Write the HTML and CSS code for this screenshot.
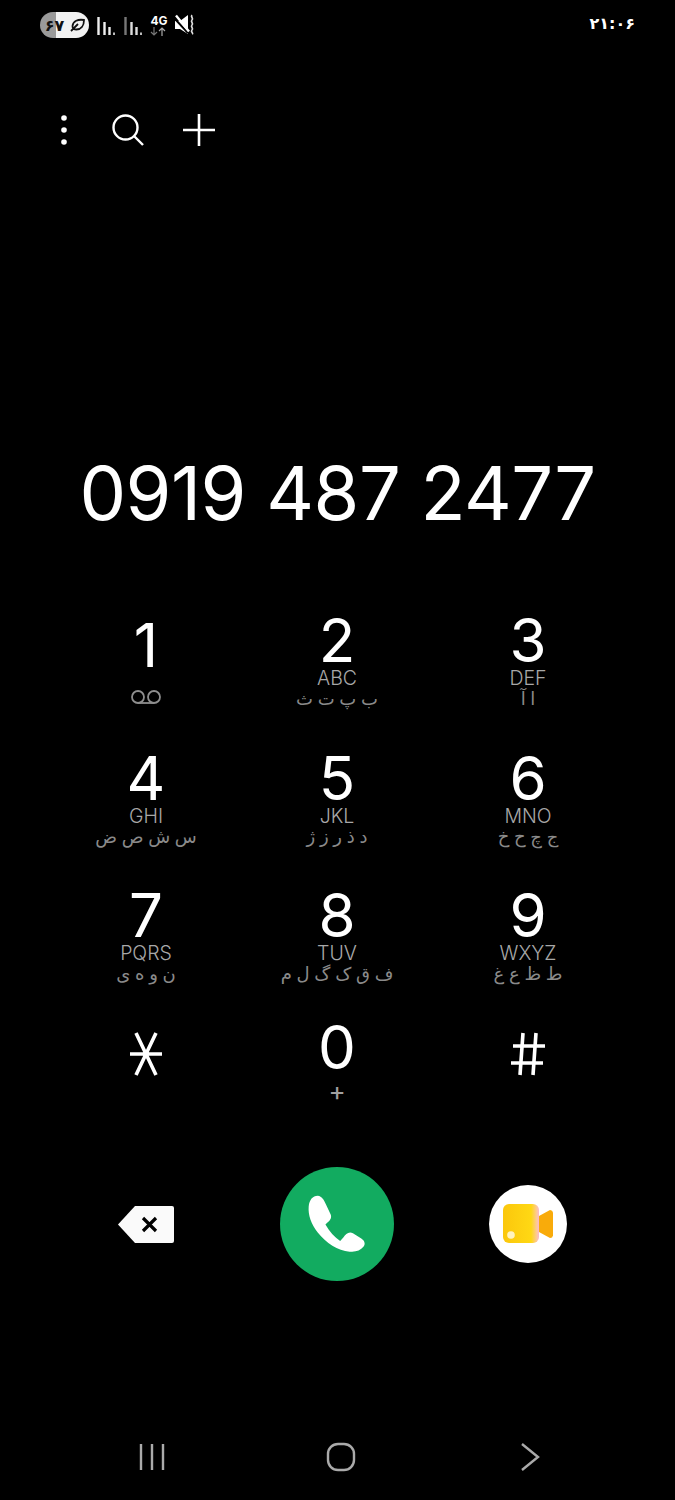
FILE: index.html
```html
<!DOCTYPE html>
<html lang="fa">
<head>
  <meta charset="UTF-8">
  <meta name="viewport" content="width=device-width, initial-scale=1.0">
  <title>Dialer</title>
  <link rel="stylesheet" href="styles.css">
</head>
<body>
  <div class="status-bar">
    <div class="status-icons">
      <div class="battery">
        <span class="battery-level">۶۷</span>
        <svg width="16" height="14" viewBox="0 0 16 14"><path d="M14 2C8 1 3 3 2.500 8c-.2 2 1.500 3.500 4 3.500C11 11.500 14 8 14 2zM1 13l7-7" fill="none" stroke="#111" stroke-width="1.800"/></svg>
      </div>
      <svg class="signal" width="20" height="22" viewBox="0 0 20 22"><path d="M2.500 3v18M8.500 8v13M13.500 13v8" stroke="#eee" stroke-width="2.400"/><rect x="17" y="18.500" width="2" height="2.500" fill="#bbb"/></svg>
      <svg class="signal" width="20" height="22" viewBox="0 0 20 22"><path d="M2.500 3v18" stroke="#777" stroke-width="2.400"/><path d="M8.500 8v13M13.500 13v8" stroke="#ddd" stroke-width="2.400"/><rect x="17" y="18.500" width="2" height="2.500" fill="#bbb"/></svg>
      <div class="network">
        <span>4G</span>
        <svg width="16" height="9" viewBox="0 0 16 9"><path d="M4 0v8M1 5l3 3 3-3" fill="none" stroke="#777" stroke-width="1.200"/><path d="M12 9V1M9 4l3-3 3 3" fill="none" stroke="#aaa" stroke-width="1.200"/></svg>
      </div>
      <svg class="mute" width="20" height="22" viewBox="0 0 20 22"><path d="M0 7h5l8-6v19l-8-5H0z" fill="#fff"/><path d="M-1 4l14 15" stroke="#000" stroke-width="2"/><path d="M1 1.500l13 16" stroke="#fff" stroke-width="2.400"/><path d="M17 1c-2 2 2 3 0 5s2 3 0 5 2 3 0 5 2 3 0 4" fill="none" stroke="#ddd" stroke-width="1.700"/></svg>
    </div>
    <span class="clock">۲۱:۰۶</span>
  </div>

  <div class="toolbar">
    <svg width="8" height="32" viewBox="0 0 8 32"><circle cx="4" cy="4" r="2.800" fill="#fff"/><circle cx="4" cy="16" r="2.800" fill="#fff"/><circle cx="4" cy="28" r="2.800" fill="#fff"/></svg>
    <svg class="search" width="32" height="32" viewBox="0 0 32 32"><circle cx="13.500" cy="13.500" r="12" fill="none" stroke="#fff" stroke-width="2.400"/><path d="M22 22l9 9" stroke="#fff" stroke-width="2.400"/></svg>
    <svg width="32" height="32" viewBox="0 0 32 32"><path d="M16 0v32M0 16h32" stroke="#fff" stroke-width="2.600"/></svg>
  </div>

  <div class="number">0919 487 2477</div>

  <div class="keypad">
    <div class="key key-voicemail">
      <span class="digit">1</span>
      <svg class="voicemail" width="32" height="14" viewBox="0 0 32 14"><circle cx="8" cy="7" r="6" fill="none" stroke="#8e8e8e" stroke-width="1.800"/><circle cx="24" cy="7" r="6" fill="none" stroke="#8e8e8e" stroke-width="1.800"/><path d="M8 13h16" stroke="#8e8e8e" stroke-width="1.800"/></svg>
    </div>
    <div class="key"><span class="digit">2</span><span class="latin">ABC</span><span class="farsi">ب پ ت ث</span></div>
    <div class="key"><span class="digit">3</span><span class="latin">DEF</span><span class="farsi">ا آ</span></div>
    <div class="key"><span class="digit">4</span><span class="latin">GHI</span><span class="farsi">س ش ص ض</span></div>
    <div class="key"><span class="digit">5</span><span class="latin">JKL</span><span class="farsi">د ذ ر ز ژ</span></div>
    <div class="key"><span class="digit">6</span><span class="latin">MNO</span><span class="farsi">ج چ ح خ</span></div>
    <div class="key"><span class="digit">7</span><span class="latin">PQRS</span><span class="farsi">ن و ه ی</span></div>
    <div class="key"><span class="digit">8</span><span class="latin">TUV</span><span class="farsi">ف ق ک گ ل م</span></div>
    <div class="key"><span class="digit">9</span><span class="latin">WXYZ</span><span class="farsi">ط ظ ع غ</span></div>
    <div class="key key-symbol">
      <svg width="34" height="44" viewBox="0 0 34 44"><path d="M1 22h32M7 1l20 42M27 1L7 43" stroke="#fff" stroke-width="3.600"/></svg>
    </div>
    <div class="key"><span class="digit">0</span><span class="plus">+</span></div>
    <div class="key key-symbol">
      <svg width="36" height="44" viewBox="0 0 36 44"><path d="M13 1L10 43M26 1L23 43M3 14h32M1 31h32" stroke="#fff" stroke-width="3.600"/></svg>
    </div>
  </div>

  <div class="actions">
    <svg width="56" height="37" viewBox="0 0 56 37"><path d="M17 0h37a2 2 0 0 1 2 2v33a2 2 0 0 1-2 2H17L0 18.500z" fill="#fafafa"/><path d="M25 12l13 13M38 12L25 25" stroke="#000" stroke-width="3.200"/></svg>
    <div class="call-btn">
      <svg width="62" height="62" viewBox="620 100 185 185"><path d="M628 140C630 120 640 108 655 108C668 110 672 118 680 135L694 165C697 175 692 182 684 188L678 194C690 215 705 232 722 243L732 232C738 222 748 214 760 220L785 236C795 243 798 252 792 260C782 272 768 277 750 275C715 272 680 250 655 218C635 192 626 165 628 140Z" fill="#fff"/></svg>
    </div>
    <div class="video-btn">
      <svg width="78" height="78" viewBox="0 0 78 78">
        <defs>
          <linearGradient id="bodyFill" x1="0" y1="0" x2="1" y2="0"><stop offset="0" stop-color="#fbc70c"/><stop offset=".78" stop-color="#ffd814"/><stop offset=".95" stop-color="#fdc8a0"/><stop offset="1" stop-color="#f9b6d0"/></linearGradient>
        </defs>
        <path d="M50 31l11-6a3 3 0 0 1 3 2.500v23a3 3 0 0 1-3 2.500l-11-6z" fill="#f9ab0a"/>
        <rect x="14" y="19" width="36" height="39" rx="6" fill="url(#bodyFill)"/>
        <circle cx="22" cy="50" r="3.800" fill="#fff3c0"/>
      </svg>
    </div>
  </div>

  <div class="nav-bar">
    <svg width="26" height="28" viewBox="0 0 26 28"><path d="M2 1v26M13 1v26M24 1v26" stroke="#aaa" stroke-width="2.400"/></svg>
    <svg width="30" height="30" viewBox="0 0 30 30"><rect x="2" y="2" width="26" height="26" rx="10" fill="none" stroke="#aaa" stroke-width="2.400"/></svg>
    <svg width="20" height="28" viewBox="0 0 20 28"><path d="M2 1l16 13L2 27" fill="none" stroke="#aaa" stroke-width="2.400"/></svg>
  </div>
</body>
</html>
```

FILE: styles.css
```css
* {
  box-sizing: border-box;
}
body {
  margin: 0;
  width: 675px;
  height: 1500px;
  background-color: #000;
  color: #fff;
  font-family: Inter, "DejaVu Sans", sans-serif;
  overflow: hidden;
}
svg {
  display: block;
  flex: none;
}
.status-bar {
  height: 50px;
  padding: 12px 40px 0;
  display: flex;
  justify-content: space-between;
  align-items: flex-start;
}
.status-icons {
  display: flex;
  align-items: center;
  gap: 7px;
}
.battery {
  width: 49px;
  height: 26px;
  padding-left: 2px;
  border-radius: 13px;
  background: linear-gradient(90deg, #9a9a9a 33%, #f2f2f2 33%);
  display: flex;
  align-items: center;
  justify-content: center;
  gap: 6px;
}
.battery-level {
  font-family: "DejaVu Sans", sans-serif;
  font-size: 16px;
  font-weight: bold;
  color: #111;
}
.network {
  width: 18px;
  font-size: 12px;
  font-weight: 700;
  line-height: 12px;
  text-align: center;
}
.clock {
  font-family: "DejaVu Sans", sans-serif;
  font-size: 16px;
  font-weight: bold;
  line-height: 24px;
  direction: ltr;
}
.toolbar {
  height: 64px;
  padding: 0 0 0 60px;
  margin-top: 64px;
  display: flex;
  align-items: flex-start;
  gap: 38px;
}
.toolbar .search {
  margin-left: 6px;
  margin-right: 1px;
}
.number {
  margin-top: 265px;
  margin-bottom: 70px;
  height: 100px;
  font-size: 74px;
  font-weight: 400;
  line-height: 100px;
  letter-spacing: -0.500px;
  text-align: center;
  white-space: nowrap;
}
.keypad {
  margin: 0 50.500px;
  display: grid;
  grid-template-columns: repeat(3, 191px);
  grid-template-rows: 138px 137px 132px 90px;
}
.key {
  display: flex;
  flex-direction: column;
  align-items: center;
}
.key-voicemail {
  padding-top: 5px;
}
.key-symbol {
  padding-top: 12px;
}
.digit {
  font-size: 60px;
  font-weight: 400;
  line-height: 55px;
}
.latin {
  font-size: 19.500px;
  font-weight: 300;
  line-height: 20px;
  color: #a8a8a8;
}
.farsi {
  font-family: "DejaVu Sans", sans-serif;
  font-size: 18px;
  line-height: 21px;
  word-spacing: -1px;
  color: #8a8a8a;
  direction: rtl;
  white-space: nowrap;
}
.plus {
  font-size: 26px;
  font-weight: 400;
  line-height: 32px;
  color: #a0a0a0;
}
.voicemail {
  margin-top: 17px;
}
.actions {
  margin: 57px 50.500px 0;
  display: grid;
  grid-template-columns: repeat(3, 191px);
  justify-items: center;
  align-items: center;
}
.call-btn {
  width: 114px;
  height: 114px;
  border-radius: 50%;
  background-color: #12ab60;
  display: flex;
  align-items: center;
  justify-content: center;
}
.video-btn {
  width: 78px;
  height: 78px;
  border-radius: 50%;
  background-color: #fff;
}
.nav-bar {
  margin: 161px 57.500px 0;
  display: grid;
  grid-template-columns: repeat(3, 189px);
  justify-items: center;
  align-items: center;
}
```
